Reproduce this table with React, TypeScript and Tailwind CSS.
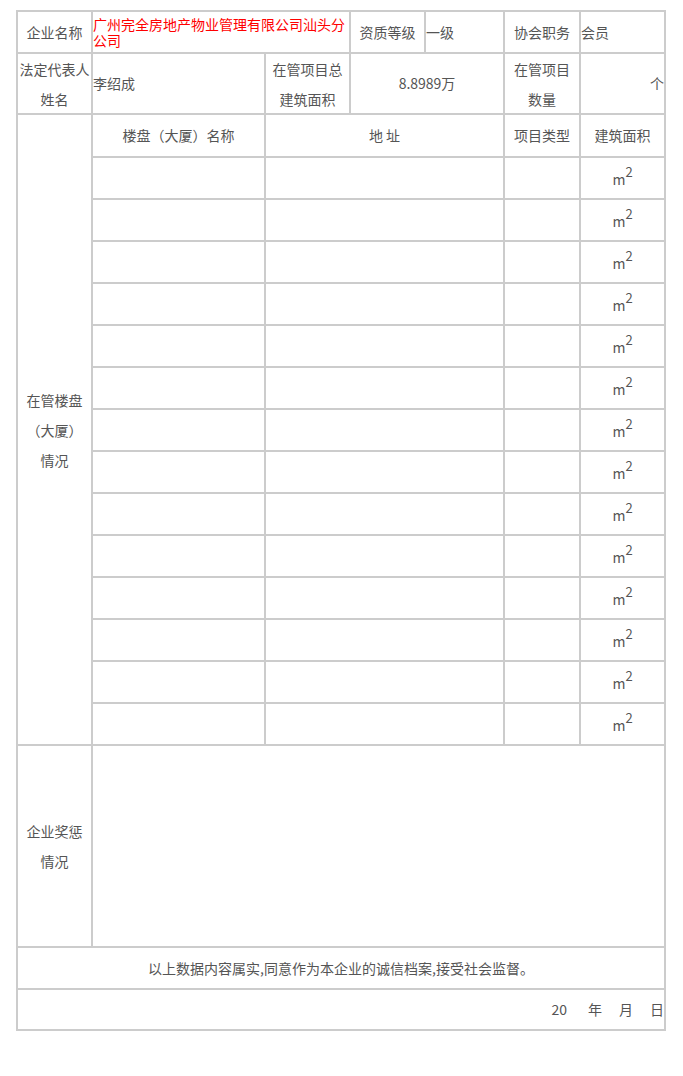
const rows = Array.from({ length: 14 }, (_, i) => i);

const Cell = ({ className = "", children }: { className?: string; children?: React.ReactNode }) => (
  <div className={`bg-white flex items-center ${className}`}>{children}</div>
);

export default function App() {
  return (
    <div className="bg-white min-h-[1076px] pt-[10px] pl-[16px] text-[14px] text-[#555]" style={{ fontFamily: '"Microsoft YaHei", "Noto Sans CJK SC", sans-serif' }}>
      <div className="grid w-fit bg-[#ccc] p-[2px] gap-[2px] grid-cols-[73px_171px_83px_73px_77px_74px_83px] grid-rows-[40px_59px_41px_repeat(14,40px)_200px_40px_39px]">
        {/* row 1 */}
        <Cell className="justify-center">企业名称</Cell>
        <Cell className="col-span-2 text-[#f00] leading-[16px]">广州完全房地产物业管理有限公司汕头分公司</Cell>
        <Cell className="justify-center">资质等级</Cell>
        <Cell>一级</Cell>
        <Cell className="justify-center">协会职务</Cell>
        <Cell>会员</Cell>

        {/* row 2 */}
        <Cell className="justify-center text-center leading-[30px]">法定代表人<br />姓名</Cell>
        <Cell>李绍成</Cell>
        <Cell className="justify-center text-center leading-[30px]">在管项目总<br />建筑面积</Cell>
        <Cell className="col-span-2 justify-center">8.8989万</Cell>
        <Cell className="justify-center text-center leading-[30px]">在管项目<br />数量</Cell>
        <Cell className="justify-end">个</Cell>

        {/* buildings */}
        <Cell className="row-span-15 justify-center text-center leading-[30px]">在管楼盘<br />（大厦）<br />情况</Cell>
        <Cell className="justify-center">楼盘（大厦）名称</Cell>
        <Cell className="col-span-3 justify-center">地 址</Cell>
        <Cell className="justify-center">项目类型</Cell>
        <Cell className="justify-center">建筑面积</Cell>
        {rows.map((i) => (
          <div key={i} className="contents">
            <Cell />
            <Cell className="col-span-3" />
            <Cell />
            <Cell className="justify-center pt-[2px]">
              m<sup className="text-[13px] -top-[0.55em]">2</sup>
            </Cell>
          </div>
        ))}

        {/* awards */}
        <Cell className="justify-center text-center leading-[30px]">企业奖惩<br />情况</Cell>
        <Cell className="col-span-6" />

        <Cell className="col-span-7 justify-center">以上数据内容属实,同意作为本企业的诚信档案,接受社会监督。</Cell>
        <Cell className="col-span-7 justify-end">
          <span>20</span>
          <span className="ml-[21px]">年</span>
          <span className="ml-[17px]">月</span>
          <span className="ml-[17px]">日</span>
        </Cell>
      </div>
    </div>
  );
}
